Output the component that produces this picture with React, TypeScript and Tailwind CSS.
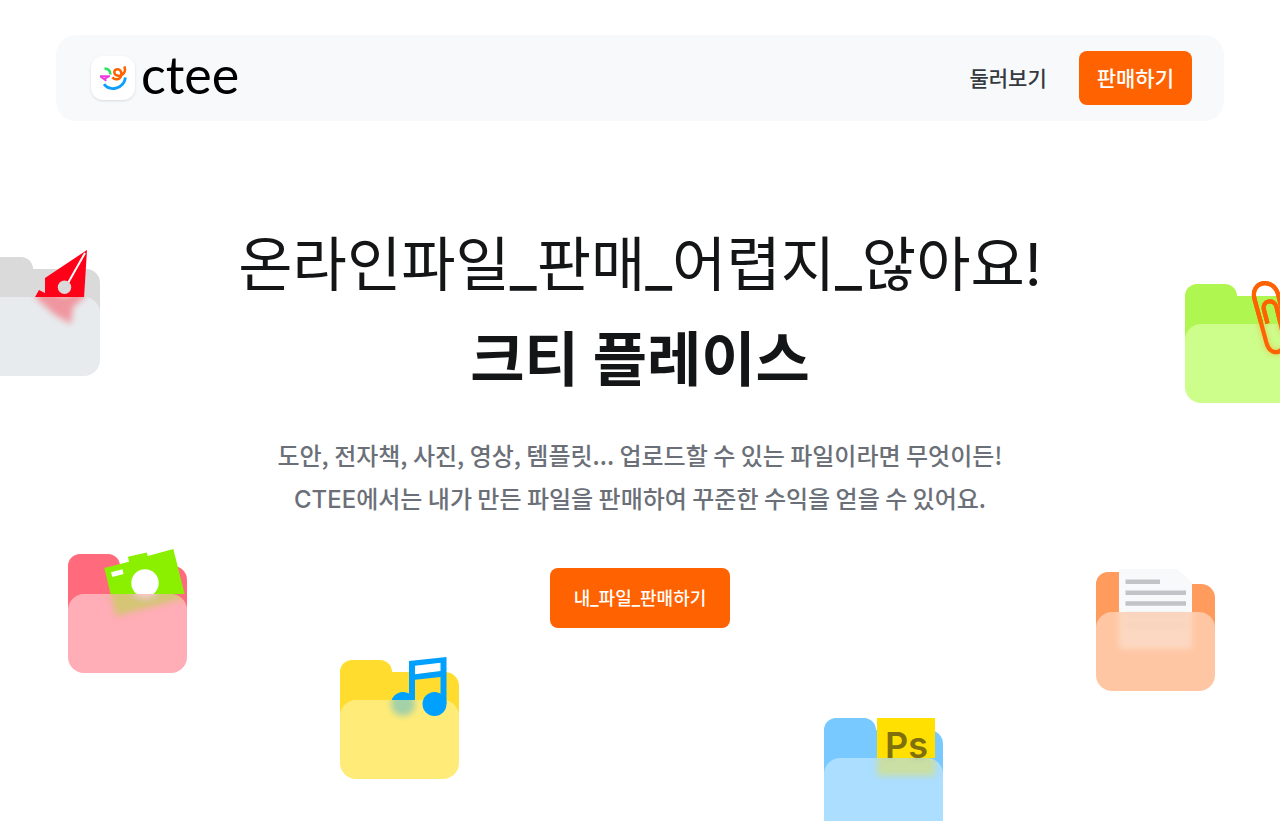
import type { ReactNode } from 'react';

type FolderProps = {
  id: string;
  className: string;
  back: string;
  front: string;
  item: ReactNode;
  over?: ReactNode;
};

function Folder({ id, className, back, front, item, over }: FolderProps) {
  return (
    <svg
      aria-hidden="true"
      className={`pointer-events-none absolute overflow-visible ${className}`}
      width="119"
      height="119"
      viewBox="0 0 119 119"
    >
      <defs>
        <clipPath id={`${id}-top`}>
          <rect x="-10" y="-20" width="150" height="60" />
        </clipPath>
        <clipPath id={`${id}-front`}>
          <rect y="40" width="119" height="79" rx="16" />
        </clipPath>
        <filter id={`${id}-blur`} x="-30%" y="-30%" width="160%" height="160%">
          <feGaussianBlur stdDeviation="3" />
        </filter>
      </defs>
      <path
        d="M0 12A12 12 0 0 1 12 0H40A12 12 0 0 1 52 12H105A14 14 0 0 1 119 26V90H0Z"
        fill={back}
      />
      <g clipPath={`url(#${id}-top)`}>{item}</g>
      <rect y="40" width="119" height="79" rx="16" fill={front} />
      <g clipPath={`url(#${id}-front)`}>
        <g filter={`url(#${id}-blur)`} opacity="0.36">
          {item}
        </g>
      </g>
      {over}
    </svg>
  );
}

function Pen() {
  return (
    <g>
      <path d="M54 40L58 33L64 36V21L106 -7L103 41L92 50L90 67L74 58Z" fill="#ff0019" />
      <path d="M104 -4L87 26" stroke="#fff" strokeWidth="2" />
      <circle cx="83.5" cy="30.3" r="6.7" fill="#dadada" />
    </g>
  );
}

function Camera() {
  return (
    <g>
      <path d="M36.3 14L61 7.7L60 2.7L78.7 -1.5L79.7 2L105.3 -5L117.5 43.5L48 62Z" fill="#8bf000" />
      <circle cx="77" cy="29" r="13.7" fill="#fff" />
      <path d="M43 18.3L54.5 15.3L55.7 20L44.3 23Z" fill="#fff" />
    </g>
  );
}

function Paper() {
  return (
    <g>
      <path d="M23 -3H81L96 10V77H23Z" fill="#f7f9fb" />
      <path d="M29.5 9.8H64M29.5 20.7H90M29.5 31.5H90" stroke="#c1c3c7" strokeWidth="4.4" />
      <path d="M29.5 42H90M29.5 53H90" stroke="#e3e5e8" strokeWidth="4.4" />
    </g>
  );
}

function Photoshop() {
  return (
    <g>
      <rect x="53" width="58" height="58" fill="#ffe000" />
      <text x="61" y="40" fontSize="36" fontWeight="600" fontFamily="Inter, sans-serif" fill="#80700b">
        Ps
      </text>
    </g>
  );
}

function PaperClip() {
  return (
    <path
      d="M103 50L93 10C88 -7 65 -3 69.5 15L81.500 59C84 69 93 71 98 64M82.500 39.500L79 26C76.500 16.500 89 14 91.500 23L98 50"
      fill="none"
      stroke="#ff6200"
      strokeWidth="4.2"
    />
  );
}

function BrandMark() {
  return (
    <span className="flex size-11 items-center justify-center rounded-xl bg-white shadow-sm">
      <svg aria-hidden="true" width="44" height="44" viewBox="0 0 44 44" fill="none">
        <path d="M13.500 12.500C17 12.700 19.300 15 19.500 18.500" stroke="#2be55f" strokeWidth="2.6" />
        <path d="M9 20.300H19M9.500 20.500L15.300 24.700M17.500 20.500L13.500 23" stroke="#f03bdc" strokeWidth="2" />
        <path
          d="M21.300 21.300C24 24.300 29 24 30.200 19.500C31 15.500 29 13.200 26.500 13.200C24.500 13.200 23.200 14.700 23.300 16.500C23.500 19 26 20 28.500 19.700C33 19 35 15 33.500 10.300"
          stroke="#ff6200"
          strokeWidth="2.6"
        />
        <path d="M13 28.200C18.500 35.500 32.500 33.500 34.500 21.500" stroke="#0d9fff" strokeWidth="2.8" />
      </svg>
    </span>
  );
}

export default function App() {
  return (
    <div className="relative min-h-screen overflow-hidden bg-white px-14 pt-[35px] font-['Inter','Noto_Sans_CJK_KR',sans-serif] text-[#141517]">
      <header className="flex h-[86px] items-center justify-between rounded-[20px] bg-[#f8f9fb] pr-8 pl-[35px]">
        <a href="#" className="flex items-center gap-1.5">
          <BrandMark />
          <span className="-mt-2 font-['Lato',sans-serif] text-[52px] leading-none text-black">ctee</span>
        </a>
        <nav className="flex items-center gap-8">
          <a href="#browse" className="pt-0.5 text-[21px] font-medium text-[#343a40]">둘러보기</a>
          <button type="button" className="h-[54px] rounded-lg bg-[#ff6200] px-[18px] pt-0.5 text-[21px] font-medium text-white">
            판매하기
          </button>
        </nav>
      </header>

      <main className="flex flex-col items-center pt-24 text-center">
        <h1 className="text-[59px] leading-[95px] whitespace-nowrap">
          <span className="block font-normal">온라인파일_판매_어렵지_않아요!</span>
          <strong className="block font-bold">크티 플레이스</strong>
        </h1>
        <p className="mt-[26px] font-['Noto_Sans_CJK_KR',sans-serif] text-[24px] leading-[43px] font-medium whitespace-nowrap text-[#6b7078]">
          도안, 전자책, 사진, 영상, 템플릿... 업로드할 수 있는 파일이라면 무엇이든!
          <br />
          <span className="font-['Inter',sans-serif]">CTEE</span>에서는 내가 만든 파일을 판매하여 꾸준한 수익을 얻을 수 있어요.
        </p>
        <button type="button" className="mt-[47px] h-[60px] rounded-lg bg-[#ff6200] px-6 text-[18px] font-medium text-white">
          내_파일_판매하기
        </button>
      </main>

      <Folder id="design" className="top-[257px] -left-[19px]" back="#dadada" front="#e7ebee" item={<Pen />} />
      <Folder
        id="attach"
        className="top-[284px] -right-[24px]"
        back="#aff750"
        front="#cdfd8a"
        item={<PaperClip />}
        over={<PaperClip />}
      />
      <Folder id="photo" className="top-[554px] left-[68px]" back="#ff6b7d" front="#ffadb6" item={<Camera />} />
      <Folder
        id="music"
        className="top-[660px] left-[340px]"
        back="#ffdc2e"
        front="#ffec78"
        item={<circle cx="63" cy="44" r="12" fill="#00a0ff" />}
        over={
          <g fill="#00a0ff">
            <path d="M75 5.700L100.500 2.300V11L75 14.500Z" fill="#fff" />
            <path d="M69 1L106.500 -3V44H100.500V17L75 19.700V40H69ZM75 5.700V14.300L100.500 11V2.700Z" fillRule="evenodd" />
            <circle cx="94.500" cy="44" r="12" />
          </g>
        }
      />
      <Folder id="psd" className="top-[718px] left-[824px]" back="#78c9ff" front="#abdeff" item={<Photoshop />} />
      <Folder id="document" className="top-[572px] right-[65px]" back="#ff9b5c" front="#ffc6a3" item={<Paper />} />
    </div>
  );
}
